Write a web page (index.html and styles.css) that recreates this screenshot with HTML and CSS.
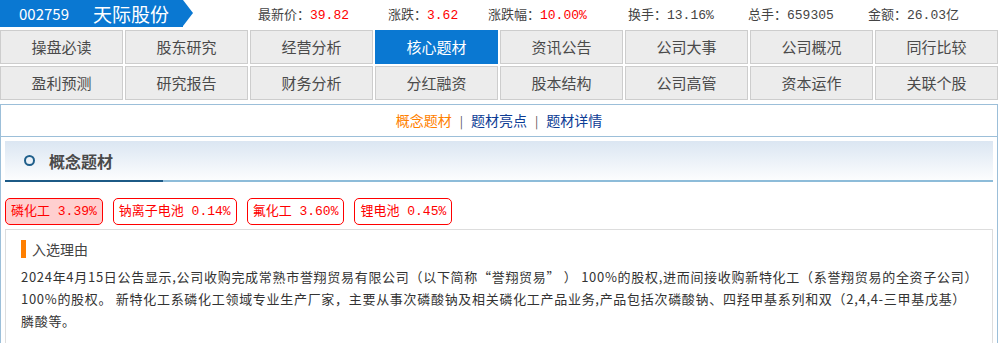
FILE: index.html
```html
<!DOCTYPE html>
<html lang="zh-CN">
<head>
    <meta charset="utf-8">
    <title>天际股份 - 核心题材</title>
    <link rel="stylesheet" href="styles.css">
</head>
<body>
    <!-- 顶部股票信息 -->
    <div class="top">
        <div class="stock">
            <span class="code">002759</span>
            <span class="name">天际股份</span>
        </div>
        <div class="quote">
            <span class="q q1">最新价：<em>39.82</em></span>
            <span class="q q2">涨跌：<em>3.62</em></span>
            <span class="q q3">涨跌幅：<em>10.00%</em></span>
            <span class="q q4">换手：13.16%</span>
            <span class="q q5">总手：659305</span>
            <span class="q q6">金额：26.03亿</span>
        </div>
    </div>

    <!-- 导航 -->
    <div class="nav">
        <a>操盘必读</a>
        <a>股东研究</a>
        <a>经营分析</a>
        <a class="on">核心题材</a>
        <a>资讯公告</a>
        <a>公司大事</a>
        <a>公司概况</a>
        <a>同行比较</a>
        <a>盈利预测</a>
        <a>研究报告</a>
        <a>财务分析</a>
        <a>分红融资</a>
        <a>股本结构</a>
        <a>公司高管</a>
        <a>资本运作</a>
        <a>关联个股</a>
    </div>

    <div class="content">
        <div class="subnav">
            <a class="cur">概念题材</a><span class="sep">|</span><a>题材亮点</a><span class="sep">|</span><a>题材详情</a>
        </div>

        <div class="panel-head">
            <span class="dot"></span>
            <h3>概念题材</h3>
        </div>

        <div class="tags">
            <span class="tag active">磷化工 3.39%</span>
            <span class="tag">钠离子电池 0.14%</span>
            <span class="tag">氟化工 3.60%</span>
            <span class="tag">锂电池 0.45%</span>
        </div>

        <div class="reason">
            <div class="reason-title">入选理由</div>
            <p>2024年4月15日公告显示,公司收购完成常熟市誉翔贸易有限公司（以下简称“誉翔贸易” ） 100%的股权,进而间接收购新特化工（系誉翔贸易的全资子公司）100%的股权。 新特化工系磷化工领域专业生产厂家，主要从事次磷酸钠及相关磷化工产品业务,产品包括次磷酸钠、四羟甲基系列和双（2,4,4-三甲基戊基）膦酸等。</p>
        </div>
    </div>
</body>
</html>
```

FILE: styles.css
```css
/* 页面整体 */
body {
    margin: 0;
    font-family: "Noto Sans CJK SC", "Liberation Sans", sans-serif;
    font-size: 13px;
    color: #333;
    background: #fff;
    overflow: hidden;
}

a {
    text-decoration: none;
}

/* 顶部 */
.top {
    display: flex;
    align-items: center;
    height: 27px;
}

.stock {
    position: relative;
    width: 183px;
    height: 27px;
    background: #0a78d2;
    color: #fff;
    display: flex;
    align-items: center;
}

.stock::after {
    content: "";
    position: absolute;
    right: -10px;
    top: 0;
    border-left: 10px solid #0a78d2;
    border-top: 13.5px solid transparent;
    border-bottom: 13.5px solid transparent;
}

.code {
    margin-left: 19px;
    font-size: 15px;
    width: 74px;
}

.name {
    font-size: 19px;
}

.quote {
    display: flex;
    margin-left: 75px;
    color: #444;
    font-family: "Liberation Mono", "Noto Sans CJK SC", monospace;
}

.q em {
    font-style: normal;
    color: #f00;
}

.q1 { width: 130px; }
.q2 { width: 100px; }
.q3 { width: 140px; }
.q4 { width: 120px; }
.q5 { width: 120px; }

/* 导航 */
.nav {
    display: grid;
    grid-template-columns: repeat(8, 123px);
    column-gap: 2px;
    row-gap: 2px;
    margin-top: 3px;
}

.nav a {
    height: 32px;
    line-height: 32px;
    text-align: center;
    background: #ececec;
    border: 1px solid #cdcdcd;
    color: #4a4a4a;
    font-size: 15px;
}

.nav a.on {
    background: #0a78d2;
    border-color: #0a78d2;
    color: #fff;
}

/* 内容区 */
.content {
    margin-top: 4px;
    width: 996px;
    border: 1px solid #9cbfd9;
    border-bottom: none;
    height: 238px;
    overflow: hidden;
}

.subnav {
    height: 31px;
    line-height: 30px;
    text-align: center;
    border-bottom: 1px solid #9cbfd9;
    font-size: 14px;
}

.subnav a {
    color: #0d3c95;
}

.subnav a.cur {
    color: #ff7f00;
}

.sep {
    color: #555;
    margin: 0 8px;
    font-size: 12px;
}

.panel-head {
    margin: 4px 4px 0 4px;
    height: 39px;
    background: linear-gradient(#dbe6f2, #fcfdfe);
    border-bottom: 2px solid #8dbcd9;
    display: flex;
    align-items: center;
    position: relative;
}

.panel-head::after {
    content: "";
    position: absolute;
    left: 0;
    bottom: -2px;
    width: 158px;
    height: 2px;
    background: #1c5a86;
}

.dot {
    width: 7px;
    height: 7px;
    border: 2px solid #1f5f8b;
    border-radius: 50%;
    margin-left: 19px;
    margin-right: 14px;
}

.panel-head h3 {
    margin: 0;
    font-size: 16px;
    color: #4a4a4a;
}

/* 概念标签 */
.tags {
    display: flex;
    gap: 10px;
    margin: 16px 4px 0 4px;
}

.tag {
    height: 25px;
    line-height: 25px;
    padding: 0 5px;
    border: 1px solid #f00;
    border-radius: 5px;
    color: #f00;
    font-size: 13px;
    font-family: "Liberation Mono", "Noto Sans CJK SC", monospace;
}

.tag.active {
    background: #ffcfcf;
}

/* 入选理由 */
.reason {
    margin: 4px 4px 0 4px;
    border: 1px solid #ddd;
    height: 120px;
    padding: 10px 15px 0 15px;
}

.reason-title {
    border-left: 5px solid #ff7f00;
    padding-left: 6px;
    height: 18px;
    line-height: 18px;
    font-size: 14px;
    color: #444;
}

.reason p {
    margin: 8px 0 0 0;
    line-height: 22px;
    letter-spacing: 0.7px;
    color: #333;
}
```
